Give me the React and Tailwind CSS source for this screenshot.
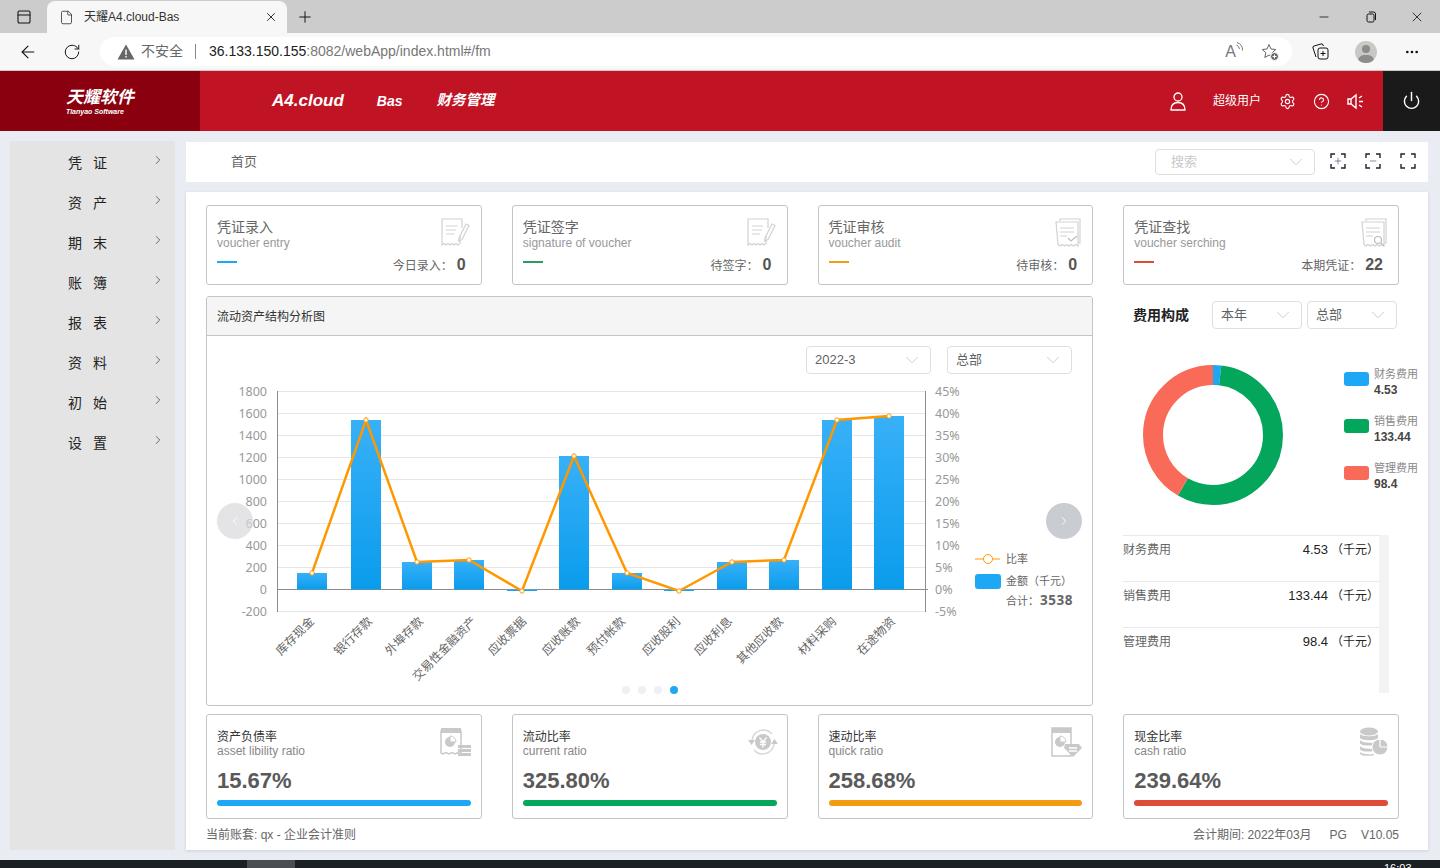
import React from 'react';
import {
  ArrowLeft,
  ChevronDown,
  ChevronLeft,
  ChevronRight,
  CircleHelp,
  Ellipsis,
  File,
  Minus,
  PanelTop,
  Plus,
  Power,
  RotateCw,
  Settings,
  X,
} from 'lucide-react';

const CJK = "font-['Liberation_Sans','Noto_Sans_CJK_SC',sans-serif]";

const menu = ['凭 证', '资 产', '期 末', '账 簿', '报 表', '资 料', '初 始', '设 置'];

/* ─── Card icons ─────────────────────────────────────── */
function PenDoc() {
  return (
    <svg width="30" height="30" viewBox="0 0 30 30" fill="none" stroke="#cfd2d6" strokeWidth="1.2">
      <path d="M21 10V1H1v26l2-1.500 2 1.500 2-1.500 2 1.500 2-1.500 2 1.500 2-1.500 2 1.500 2-1.500V18" />
      <path d="M5 8h11M5 12h10M5 16h8" />
      <path d="M18 20l7-14 3 1.500-7 14-3.500 1.500z" />
    </svg>
  );
}

function AuditDoc({ search }) {
  return (
    <svg width="28" height="30" viewBox="0 0 28 30" fill="none" stroke="#cfd2d6" strokeWidth="1.2">
      <path d="M6 3V1h20v24h-2" />
      <path d="M2 4h22v24l-2.500-1.500-2 1.500-2.500-1.500-2 1.500-2.500-1.500-2 1.500-2.500-1.500-2 1.500-2-1.500z" />
      <path d="M6 10h14M6 14h14M6 18h7" />
      {search ? (
        <g stroke="#b9bdc2">
          <circle cx="18" cy="22" r="3.500" />
          <path d="M21 25l3 3" />
        </g>
      ) : (
        <path d="M14 20l3 3 6-5" stroke="#b9bdc2" />
      )}
    </svg>
  );
}

function PieDoc() {
  return (
    <svg width="32" height="30" viewBox="0 0 32 30" fill="none">
      <path d="M1 4h20v23l-3-1.500-3 1.500-3-1.500-3 1.500-3-1.500-3 1.500-2-1z" stroke="#c9c9c9" strokeWidth="1.500" />
      <path d="M1 1h20v5H1z" fill="#c9c9c9" />
      <circle cx="10" cy="15" r="5" fill="#c9c9c9" />
      <path d="M10 15V9a6 6 0 0 1 6 6z" fill="#fff" stroke="#c9c9c9" />
      <path d="M18 18h13v3H18zM18 22h13v3H18zM18 26h13v3H18z" fill="#c9c9c9" />
    </svg>
  );
}

function YenIcon() {
  return (
    <svg width="30" height="30" viewBox="0 0 30 30" fill="none">
      <circle cx="15" cy="15" r="8" fill="#c9c9c9" />
      <path d="M11.500 10.500L15 15l3.500-4.500M15 15v5.500M12 15h6M12 17.500h6" stroke="#fff" strokeWidth="1.300" />
      <path d="M4 13A11.500 11.500 0 0 1 24 7M26 17a11.500 11.500 0 0 1-20 6" stroke="#d6d6d6" strokeWidth="1.500" />
      <path d="M0 13h7l-3.500 5zM23 17h7l-3.500-5z" fill="#c9c9c9" />
    </svg>
  );
}

function QuickIcon() {
  return (
    <svg width="32" height="32" viewBox="0 0 32 32" fill="none">
      <path d="M1 1h19v28H1z" stroke="#c9c9c9" strokeWidth="1.500" />
      <path d="M1 1h19v5H1z" fill="#c9c9c9" />
      <circle cx="9" cy="15" r="5" fill="#c9c9c9" />
      <path d="M9 15V9a6 6 0 0 1 6 6z" fill="#fff" stroke="#c9c9c9" />
      <path d="M14 17h14l3 4-9 9-9-9z" fill="#c9c9c9" />
      <path d="M18 21h8M18 24h8" stroke="#fff" strokeWidth="1.300" />
    </svg>
  );
}

function CoinIcon() {
  return (
    <svg width="30" height="30" viewBox="0 0 30 30" fill="none">
      <ellipse cx="10" cy="4.500" rx="9" ry="4" fill="#c9c9c9" />
      <path d="M1 7c2 3 16 3 18 0v4c-2 3-16 3-18 0zM1 13c2 3 12 3 14 2.500V18c-3 1-12 1-14-1.500zM1 19c2 3 10 3 13 2.500V24c-3 1-11 1-13-1.500zM1 25c2 2 10 3 14 2v1c-4 1.500-12 1-14-1z" fill="#c9c9c9" />
      <circle cx="21" cy="20" r="8" fill="#c9c9c9" stroke="#fff" />
      <path d="M21 20v-8.500M21 20h8.500" stroke="#fff" strokeWidth="1.200" />
    </svg>
  );
}

/* ─── Small pieces ───────────────────────────────────── */
function FakeSelect({ label, className, muted }) {
  return (
    <div className={`flex items-center justify-between pl-2 pr-[7px] bg-white border border-[#dcdfe6] rounded ${className}`}>
      <span className={`text-[13px] ${muted ? 'text-[#c8c9cc]' : 'text-[#606266]'}`}>{label}</span>
      <ChevronDown size={22} strokeWidth={0.8} className="text-[#b4bccc]" />
    </div>
  );
}

function FocusIcon({ children }) {
  return (
    <div className="relative w-4 h-4 flex items-center justify-center">
      <svg className="absolute inset-0" width="16" height="16" viewBox="0 0 16 16" fill="none" stroke="#1b2233" strokeWidth="1.400">
        <path d="M1 5V1h4M11 1h4v4M15 11v4h-4M5 15H1v-4" />
      </svg>
      {children}
    </div>
  );
}

function TopCard({ title, sub, color, label, value, icon }) {
  return (
    <div className="h-20 border border-[#c4c4c4] rounded-[3px] px-[10px] pt-[13px] relative">
      <div className="text-[14px] leading-[17px] text-[#666]">{title}</div>
      <div className="text-[12px] leading-[15px] text-[#999]">{sub}</div>
      <div className="flex items-start justify-between mt-1 pr-[5px]">
        <div className={`w-5 h-0.5 mt-1.5 ${color}`} />
        <div className="flex items-center gap-1">
          <span className="text-[12px] text-[#666] mt-0.5">{label}</span>
          <span className="text-[16px] leading-5 font-bold text-[#555]">{value}</span>
        </div>
      </div>
      <div className="absolute right-[10px] top-3">{icon}</div>
    </div>
  );
}

function RatioCard({ title, sub, value, color, icon }) {
  return (
    <div className="h-[105px] border border-[#c4c4c4] rounded-[3px] px-[10px] pt-[15px] relative">
      <div className="text-[12px] leading-[14px] text-[#333]">{title}</div>
      <div className="text-[12px] leading-[15px] text-[#888]">{sub}</div>
      <div className="text-[22px] leading-7 font-bold text-[#5a5a5a] mt-2">{value}</div>
      <div className={`h-1.5 rounded-full mt-[5px] ${color}`} />
      <div className="absolute right-[9px] top-3">{icon}</div>
    </div>
  );
}

/* ─── Chart: drawn in page coordinates, hence the viewBox ── */
const points = [
  { x: 312, y: 573, name: '库存现金', dx: 3 },
  { x: 366, y: 420, name: '银行存款', dx: 7 },
  { x: 417, y: 562, name: '外埠存款', dx: 7 },
  { x: 469, y: 560, name: '交易性金融资产', dx: 8 },
  { x: 522, y: 591, name: '应收票据', dx: 5 },
  { x: 574, y: 456, name: '应收账款', dx: 7 },
  { x: 627, y: 573, name: '预付帐款', dx: -1 },
  { x: 679, y: 591, name: '应收股利', dx: 2 },
  { x: 732, y: 562, name: '应收利息', dx: 1 },
  { x: 784, y: 560, name: '其他应收款', dx: 0 },
  { x: 837, y: 420, name: '材料采购', dx: 0 },
  { x: 889, y: 416, name: '在途物资', dx: 7 },
];
const leftTicks = ['1800', '1600', '1400', '1200', '1000', '800', '600', '400', '200', '0', '-200'];
const rightTicks = ['45%', '40%', '35%', '30%', '25%', '20%', '15%', '10%', '5%', '0%', '-5%'];
const chartFont = "'Noto Sans','Noto Sans CJK SC',sans-serif";

function Chart() {
  return (
    <svg width="885" height="331" viewBox="207 374 885 331" className="block" fontFamily={chartFont}>
      <defs>
        <linearGradient id="barFill" x1="0" y1="0" x2="0" y2="1">
          <stop offset="0" stopColor="#38b0f8" />
          <stop offset="1" stopColor="#0a9cec" />
        </linearGradient>
      </defs>
      {leftTicks.map((t, i) => (
        <g key={t}>
          <line x1="277" x2={t === '0' ? 928 : 926} y1={391.5 + i * 22} y2={391.5 + i * 22} stroke={t === '0' ? '#8c8c8c' : '#e6e6e6'} />
          <text x="267" y={396 + i * 22} textAnchor="end" fontSize="12.500" fill="#999">{t}</text>
          <text x="935" y={396 + i * 22} fontSize="12.500" fill="#999">{rightTicks[i]}</text>
        </g>
      ))}
      <line x1="277.500" x2="277.500" y1="391" y2="612" stroke="#8c8c8c" />
      <line x1="925.500" x2="925.500" y1="391" y2="612" stroke="#8c8c8c" />
      {points.map((p) => (
        <rect
          key={p.name}
          x={p.x - 15}
          y={Math.min(p.y, 589.5)}
          width="30"
          height={Math.abs(589.5 - p.y)}
          fill="url(#barFill)"
        />
      ))}
      <polyline
        points={points.map((p) => `${p.x},${p.y}`).join(' ')}
        fill="none"
        stroke="#ff9800"
        strokeWidth="2.500"
      />
      {points.map((p) => (
        <circle key={p.name} cx={p.x} cy={p.y} r="2.200" fill="#fff" stroke="#ff9800" />
      ))}
      {points.map((p) => (
        <text
          key={p.name}
          x={p.x + p.dx}
          y="622"
          textAnchor="end"
          fontSize="12"
          fill="#666"
          transform={`rotate(-45 ${p.x + p.dx} 622)`}
        >
          {p.name}
        </text>
      ))}

      {/* legend */}
      <line x1="975" x2="1000" y1="559" y2="559" stroke="#ff9800" />
      <circle cx="988" cy="559" r="4.500" fill="#fff" stroke="#ff9800" />
      <text x="1006" y="563" fontSize="11" fill="#666">比率</text>
      <rect x="975" y="574" width="26" height="15" rx="3" fill="#1ea7f5" />
      <text x="1006" y="585" fontSize="11" fill="#666">金额（千元）</text>
      <text x="1006" y="605" fontSize="11" fill="#666">合计：</text>
      <text x="1040" y="605" fontSize="13.500" fontWeight="700" fill="#666" letterSpacing="0.500">3538</text>
    </svg>
  );
}

const costs = [
  { name: '财务费用', value: '4.53', num: 4.53, color: 'bg-[#1ea7f5]', stroke: '#1ea7f5' },
  { name: '销售费用', value: '133.44', num: 133.44, color: 'bg-[#04a65b]', stroke: '#04a65b' },
  { name: '管理费用', value: '98.4', num: 98.4, color: 'bg-[#f96a58]', stroke: '#f96a58' },
];
const costTotal = costs.reduce((sum, c) => sum + c.num, 0);

function Donut() {
  let offset = 0;
  return (
    <svg width="140" height="140" viewBox="0 0 140 140" className="-rotate-90">
      {costs.map((c) => {
        const el = (
          <circle
            key={c.name}
            cx="70"
            cy="70"
            r="60"
            fill="none"
            stroke={c.stroke}
            strokeWidth="20"
            pathLength={costTotal}
            strokeDasharray={`${c.num} ${costTotal - c.num}`}
            strokeDashoffset={-offset}
          />
        );
        offset += c.num;
        return el;
      })}
    </svg>
  );
}

function CostPanel() {
  return (
    <div>
      <div className="flex items-center h-7 mt-[5px]">
        <div className="w-[89px] pl-2.5 pt-px text-[14px] font-bold text-[#222]">费用构成</div>
        <FakeSelect label="本年" className="w-[90px] h-7" />
        <FakeSelect label="总部" className="w-[90px] h-7 ml-[5px]" />
      </div>
      <div className="relative h-[206px]">
        <div className="absolute left-5 top-[36px]">
          <Donut />
        </div>
        <div className="absolute left-[221px] top-[38px] flex flex-col gap-[15px] w-[80px]">
          {costs.map((c) => (
            <div key={c.name} className="flex gap-[5px] h-8">
              <div className={`w-[25px] h-[14px] rounded-[3px] mt-[5px] shrink-0 ${c.color}`} />
              <div>
                <div className="text-[11px] leading-[15px] text-[#888] whitespace-nowrap">{c.name}</div>
                <div className="text-[12px] leading-[16px] font-bold text-[#444]">{c.value}</div>
              </div>
            </div>
          ))}
        </div>
      </div>
      <div className="flex h-[158px] w-[266px]">
        <div className="w-[256px]">
          {costs.map((c) => (
            <div key={c.name} className="h-[46px] border-t border-[#e8e8ee] flex justify-between pt-1.5 text-[12px] leading-4">
              <span className="text-[#666]">{c.name}</span>
              <span className="text-[#222]">
                <span className="text-[13px] mr-[3px]">{c.value}</span>（千元）
              </span>
            </div>
          ))}
        </div>
        <div className="w-[10px] bg-[#f3f3f3]" />
      </div>
    </div>
  );
}

export default function App() {
  return (
    <div className={`w-[1440px] h-[868px] overflow-hidden flex flex-col bg-[#e9edf3] ${CJK}`}>
      {/* ─── Browser chrome ───────────────────────────────── */}
      <div className="h-[33px] bg-[#cccccc] flex items-end shrink-0 relative">
        <div className="w-[47px] h-full flex items-center justify-center">
          <PanelTop size={16} strokeWidth={1.6} className="text-[#111]" />
        </div>
        <div className="w-[240px] h-[32px] bg-[#f7f7f7] rounded-t-lg flex items-center pl-[12px] pr-[9px]">
          <File size={15} strokeWidth={1.2} className="text-[#222]" />
          <span className="ml-[10px] text-[12px] text-[#333] flex-1">天耀A4.cloud-Bas</span>
          <X size={14} strokeWidth={1.6} className="text-[#222]" />
        </div>
        <div className="h-full flex items-center ml-[9px]">
          <Plus size={18} strokeWidth={1.3} className="text-[#111]" />
        </div>
        <div className="ml-auto h-full flex items-center gap-[31px] pr-[15px]">
          <Minus size={14} strokeWidth={1.4} className="text-[#111] mr-0.5" />
          <svg width="14" height="14" viewBox="0 0 14 14" fill="none" stroke="#111">
            <rect x="3" y="4" width="7" height="8" rx="1.500" />
            <path d="M5 2h4.500A2 2 0 0 1 11.500 4v6" />
          </svg>
          <X size={16} strokeWidth={1.2} className="text-[#111]" />
        </div>
      </div>
      <div className="h-[38px] bg-[#f7f7f7] border-b border-[#c9c9c9] flex items-center shrink-0">
        <div className="w-[100px] flex items-center pl-[18px] gap-[25px]">
          <ArrowLeft size={20} strokeWidth={1.3} className="text-[#111]" />
          <RotateCw size={18} strokeWidth={1.3} className="text-[#111]" />
        </div>
        <div className="w-[1192px] h-[29px] bg-white rounded-full flex items-center pl-[17px] pr-[13px]">
          <svg width="18" height="16" viewBox="0 0 18 16">
            <path d="M9 0.500L17.500 15.500H0.500z" fill="#666" />
            <path d="M9 5.500v5.500M9 12v1.500" stroke="#fff" strokeWidth="1.400" />
          </svg>
          <span className="ml-1.5 text-[14px] text-[#666]">不安全</span>
          <div className="w-px h-[15px] bg-[#888] ml-3 mr-[13px]" />
          <span className="text-[14px] text-[#222]">36.133.150.155</span>
          <span className="text-[14px] text-[#777]">:8082/webApp/index.html#/fm</span>
          <div className="ml-auto flex items-center gap-[17px] text-[#777]">
            <div className="flex items-start">
              <span className="text-[16px] leading-5 font-light">A</span>
              <svg width="8" height="12" viewBox="0 0 8 12" fill="none" stroke="#777">
                <path d="M0.500 3a5 5 0 0 1 3 4M1 0.500a8 8 0 0 1 5.500 8" />
              </svg>
            </div>
            <svg width="18" height="18" viewBox="0 0 18 18" fill="none" stroke="#666">
              <path d="M8 1.500l2 4.500 4.800.5-3.600 3.200 1 4.800L8 12l-4.200 2.500 1-4.800L1.200 6.500 6 6z" />
              <circle cx="13.500" cy="13.500" r="4" fill="#666" stroke="#fff" />
              <path d="M13.500 11.500v4M11.500 13.500h4" stroke="#fff" />
            </svg>
          </div>
        </div>
        <div className="flex-1 flex items-center pl-[20px]">
          <svg width="17" height="17" viewBox="0 0 17 17" fill="none" stroke="#111">
            <rect x="6" y="5" width="10" height="11" rx="2" />
            <path d="M11 8v5M8.500 10.500h5M4 14L1 5a1.500 1.500 0 0 1 1-2l7-2a1.500 1.500 0 0 1 2 1l.5 1" />
          </svg>
          <div className="ml-[26px] w-[22px] h-[22px] rounded-full bg-[#c9c8c4] overflow-hidden relative">
            <div className="absolute left-[7px] top-[4px] w-2 h-2 rounded-full bg-[#8c8c8c]" />
            <div className="absolute left-[3px] top-[14px] w-4 h-3 rounded-full bg-[#8c8c8c]" />
          </div>
          <Ellipsis size={16} className="ml-[27px] text-[#111]" />
        </div>
      </div>

      {/* ─── App header ───────────────────────────────────── */}
      <div className="h-[60px] bg-[#c01323] flex items-center text-white shrink-0">
        <div className="w-[200px] h-full bg-[#8a000f] pl-[66px] pt-4">
          <div className="text-[17px] leading-[21px] font-bold italic">天耀软件</div>
          <div className="text-[7px] leading-[8px] font-bold italic">Tianyao Software</div>
        </div>
        <div className="ml-[72px] text-[17px] font-bold italic">A4.cloud</div>
        <div className="ml-[33px] text-[14px] font-bold italic">Bas</div>
        <div className="ml-[34px] text-[14.500px] font-bold italic">财务管理</div>
        <div className="ml-auto flex items-center">
          <svg width="16" height="19" viewBox="0 0 16 19" fill="none" stroke="#fff" strokeWidth="1.300">
            <circle cx="8" cy="5" r="4" />
            <path d="M1 18c0-5 3-7.500 7-7.500s7 2.500 7 7.500z" />
          </svg>
          <span className="ml-[27px] text-[12px]">超级用户</span>
          <Settings size={17} strokeWidth={1.6} className="ml-[18px]" />
          <CircleHelp size={17} strokeWidth={1.6} className="ml-[17px]" />
          <svg width="17" height="17" viewBox="0 0 17 17" fill="none" stroke="#fff" strokeWidth="1.400" className="ml-[17px]">
            <path d="M1 6h3l5-4v13l-5-4H1z" />
            <path d="M4 6v5M12 5l3-2M12 8.500h4M12 12l3 2" />
          </svg>
          <div className="w-[57px] h-[60px] bg-[#1a1a1a] ml-[19px] flex items-center justify-center">
            <Power size={19} strokeWidth={1.8} className="-mt-0.5" />
          </div>
        </div>
      </div>

      {/* ─── Body ─────────────────────────────────────────── */}
      <div className="flex-1 flex pl-[10px] pt-[10px] gap-[11px] min-h-0">
        <div className="w-[165px] h-[709px] bg-[#e4e4e4] pt-0.5">
          {menu.map((m) => (
            <div key={m} className="h-10 flex items-center relative text-[14px] text-[#222]">
              <span className="ml-[58px] whitespace-pre tracking-[3.5px]">{m}</span>
              <ChevronRight size={14} strokeWidth={1.2} className="absolute left-[141px] top-2.5 text-[#334]" />
            </div>
          ))}
        </div>

        <div className="w-[1242px]">
          <div className="h-10 mt-px bg-white flex items-center pl-[45px] pr-[12px]">
            <span className="text-[13px] text-[#666]">首页</span>
            <FakeSelect label="搜索" muted className="w-[160px] h-[26px] ml-auto pl-[15px]" />
            <div className="flex items-center gap-[19px] ml-[15px] -mt-[3px]">
              <FocusIcon>
                <Plus size={10} strokeWidth={1.5} className="text-[#3a4a66]" />
              </FocusIcon>
              <FocusIcon>
                <Minus size={10} strokeWidth={1.5} className="text-[#3a4a66]" />
              </FocusIcon>
              <FocusIcon />
            </div>
          </div>

          <div className="h-[658px] mt-[10px] bg-white shadow-[0_1px_3px_rgba(0,0,0,0.12)] pt-[13px] px-[20px]">
            <div className="grid grid-cols-4 gap-x-[30px] w-[1193px]">
              <TopCard title="凭证录入" sub="voucher entry" color="bg-[#1ea7f5]" label="今日录入：" value="0" icon={<PenDoc />} />
              <TopCard title="凭证签字" sub="signature of voucher" color="bg-[#2e9a63]" label="待签字：" value="0" icon={<PenDoc />} />
              <TopCard title="凭证审核" sub="voucher audit" color="bg-[#f39c12]" label="待审核：" value="0" icon={<AuditDoc />} />
              <TopCard title="凭证查找" sub="voucher serching" color="bg-[#dd4b39]" label="本期凭证：" value="22" icon={<AuditDoc search />} />
            </div>

            <div className="flex mt-[11px] gap-[30px] w-[1193px]">
              {/* ─── Chart panel ─────────────────────────────── */}
              <div className="w-[887px] h-[410px] border border-[#c4c4c4] rounded-[3px] relative overflow-hidden shrink-0">
                <div className="h-[39px] bg-[#f5f5f5] border-b border-[#c4c4c4] flex items-center pl-[10px] pt-px text-[12px] text-[#333]">
                  流动资产结构分析图
                </div>
                <div className="flex justify-end gap-4 pt-[10px] pr-5">
                  <FakeSelect label="2022-3" className="w-[125px] h-7" />
                  <FakeSelect label="总部" className="w-[125px] h-7" />
                </div>
                <Chart />
                <div className="absolute left-[10px] top-[206px] w-9 h-9 rounded-full bg-[#d8d9dc]/70 flex items-center justify-center">
                  <ChevronLeft size={14} strokeWidth={1.5} className="text-white" />
                </div>
                <div className="absolute left-[839px] top-[206px] w-9 h-9 rounded-full bg-[#c9ccd1] flex items-center justify-center">
                  <ChevronRight size={14} strokeWidth={1.5} className="text-white" />
                </div>
                <div className="absolute left-[415px] top-[389px] flex gap-2">
                  <div className="w-2 h-2 rounded-full bg-[#eef0f3]" />
                  <div className="w-2 h-2 rounded-full bg-[#eef0f3]" />
                  <div className="w-2 h-2 rounded-full bg-[#eef0f3]" />
                  <div className="w-2 h-2 rounded-full bg-[#1ea7f5]" />
                </div>
              </div>
              <CostPanel />
            </div>

            <div className="grid grid-cols-4 gap-x-[30px] w-[1193px] mt-2">
              <RatioCard title="资产负债率" sub="asset libility ratio" value="15.67%" color="bg-[#1ea7f5]" icon={<PieDoc />} />
              <RatioCard title="流动比率" sub="current ratio" value="325.80%" color="bg-[#04a65b]" icon={<YenIcon />} />
              <RatioCard title="速动比率" sub="quick ratio" value="258.68%" color="bg-[#f39c12]" icon={<QuickIcon />} />
              <RatioCard title="现金比率" sub="cash ratio" value="239.64%" color="bg-[#dd4b39]" icon={<CoinIcon />} />
            </div>

            <div className="flex justify-between w-[1193px] h-[31px] items-center text-[12px] text-[#666]">
              <span>当前账套: qx - 企业会计准则</span>
              <span>
                会计期间: 2022年03月<span className="ml-[18px]">PG</span><span className="ml-[14px]">V10.05</span>
              </span>
            </div>
          </div>
        </div>
      </div>

      {/* ─── Taskbar, cut off at the bottom ───────────────── */}
      <div className="h-2 bg-[#1b2025] relative overflow-hidden shrink-0">
        <div className="absolute left-[247px] top-0 w-12 h-2 bg-[#4a4d52]" />
        <div className="absolute left-[1384px] top-[1px] text-[11px] leading-[14px] text-white">16:03</div>
      </div>
    </div>
  );
}
